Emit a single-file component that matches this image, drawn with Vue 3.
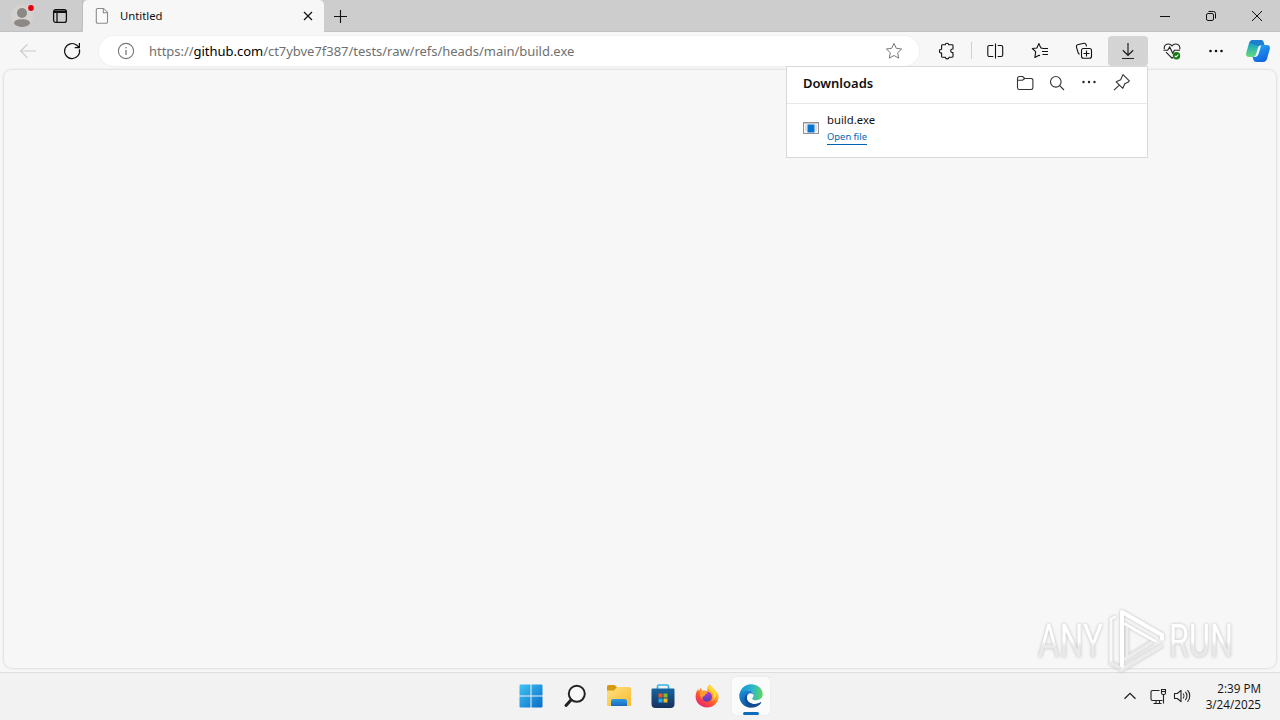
<script setup>
import { ref } from 'vue';

const tabTitle = ref('Untitled');
const url = ref({
    scheme: 'https://',
    host: 'github.com',
    path: '/ct7ybve7f387/tests/raw/refs/heads/main/build.exe',
});
const downloads = ref([{ name: 'build.exe', action: 'Open file' }]);
const clock = ref({ time: '2:39 PM', date: '3/24/2025' });
</script>

<template>
    <div class="screen">
        <!-- tab strip -->
        <header class="tabstrip">
            <div class="corner">
                <button class="avatar">
                    <svg width="28" height="28" viewBox="0 0 28 28">
                        <circle cx="14" cy="14" r="11" fill="#d5d2d0" />
                        <circle cx="14" cy="11" r="5" fill="#8b8886" />
                        <path d="M6 21.500C6 18.500 9 17.200 14 17.200s8 1.300 8 4.300C20.500 23.800 17.500 25 14 25s-6.500-1.200-8-3.500z" fill="#8b8886" />
                        <circle cx="23" cy="6" r="3.600" fill="#dcd8d6" />
                        <circle cx="23" cy="6" r="2.900" fill="#e3000f" />
                    </svg>
                </button>
                <button class="workspaces">
                    <svg width="16" height="16" viewBox="0 0 16 16" fill="none" stroke="#111" stroke-width="1.300">
                        <rect x="1.600" y="1.600" width="12.800" height="12.800" rx="2.200" />
                        <path d="M2 3.300h12M2 4.300h12" stroke-width="1.600" />
                        <path d="M5 5v9" />
                    </svg>
                </button>
            </div>
            <div class="tab">
                <svg width="16" height="18" viewBox="0 0 16 18" fill="#fafafa" stroke="#8a8a8a" stroke-width="1.100">
                    <path d="M3.500 1.500h6l4 4v9.500a1.200 1.200 0 0 1-1.200 1.200H3.500A1.200 1.200 0 0 1 2.300 15V2.700a1.200 1.200 0 0 1 1.200-1.200z" />
                    <path d="M9.300 1.700v4h4" />
                </svg>
                <span class="tab-title">{{ tabTitle }}</span>
                <svg class="tab-close" width="10" height="10" viewBox="0 0 10 10" stroke="#111" stroke-width="1.200">
                    <path d="M1 1l8 8M9 1l-8 8" />
                </svg>
            </div>
            <button class="new-tab">
                <svg width="15" height="15" viewBox="0 0 15 15" stroke="#111" stroke-width="1.100">
                    <path d="M7.500 1v13M1 7.500h13" />
                </svg>
            </button>
            <div class="window-controls">
                <svg width="46" height="32" viewBox="0 0 46 32" fill="none" stroke="#111">
                    <path d="M18 16.500h10" />
                </svg>
                <svg width="46" height="32" viewBox="0 0 46 32" fill="none" stroke="#111">
                    <rect x="18.500" y="13.500" width="7" height="7" rx="1.500" />
                    <path d="M20.500 11.500h5a2 2 0 0 1 2 2v5" />
                </svg>
                <svg width="46" height="32" viewBox="0 0 46 32" fill="none" stroke="#111">
                    <path d="M18 11l10 10M28 11l-10 10" />
                </svg>
            </div>
        </header>

        <!-- toolbar -->
        <nav class="toolbar">
            <button class="tool back">
                <svg width="20" height="20" viewBox="0 0 20 20" fill="none" stroke="#c9c9c9" stroke-width="1.100">
                    <path d="M18 10H2.800M9.500 3.200L2.600 10l6.900 6.800" />
                </svg>
            </button>
            <button class="tool reload">
                <svg width="20" height="20" viewBox="0 0 20 20" fill="none" stroke="#111" stroke-width="1.200">
                    <path d="M17.400 8.300A7.500 7.500 0 1 1 14.800 4.200L17 6.200M17.400 2v4.700h-4.700" />
                </svg>
            </button>
            <div class="address">
                <svg width="18" height="18" viewBox="0 0 18 18" fill="none" stroke="#777" stroke-width="1.100">
                    <circle cx="9" cy="9" r="7.600" />
                    <path d="M9 8v5" stroke-width="1.300" />
                    <circle cx="9" cy="5.700" r=".8" fill="#777" stroke="none" />
                </svg>
                <span class="url">
                    <span class="url-scheme">{{ url.scheme }}</span><span class="url-host">{{ url.host }}</span><span class="url-path">{{ url.path }}</span>
                </span>
                <svg class="fav" width="18" height="18" viewBox="0 0 18 18" fill="none" stroke="#777" stroke-linejoin="round">
                    <path d="M9 1.400l2.300 4.900 5.300.7-3.900 3.700 1 5.400L9 13.500l-4.700 2.600 1-5.400L1.400 7l5.300-.7z" />
                </svg>
            </div>
            <div class="tools">
                <button class="tool">
                    <svg width="20" height="20" viewBox="0 0 20 20" fill="none" stroke="#111" stroke-width="1.100" stroke-linejoin="round">
                        <path d="M5.500 3.800H8.300C8.300 1.700 11.700 1.700 11.700 3.800H15.200a.8.800 0 0 1 .8.800V8C13 7.500 13 12 16 11.600V15.400a.8.800 0 0 1-.8.800H12C12 18.400 8.400 18.400 8.400 16.200H5.400a.8.800 0 0 1-.8-.8V12C1.700 12 1.700 8.300 4.600 8.300V4.600a.8.800 0 0 1 .9-.8z" />
                    </svg>
                </button>
                <span class="divider"></span>
                <button class="tool">
                    <svg width="20" height="20" viewBox="0 0 20 20" fill="none" stroke="#111" stroke-width="1.100">
                        <path d="M8.300 4.500H4.400a1.600 1.600 0 0 0-1.600 1.600v7.800a1.600 1.600 0 0 0 1.600 1.600h3.900M12.700 4.500h3.400a1.600 1.600 0 0 1 1.600 1.600v7.800a1.600 1.600 0 0 1-1.600 1.600h-3.400M10.500 2.500v15" />
                    </svg>
                </button>
                <button class="tool">
                    <svg width="20" height="20" viewBox="0 0 20 20" fill="none" stroke="#111" stroke-width="1.100" stroke-linejoin="round">
                        <path d="M12.500 7.300L10.800 6.900 8.900 2.500 6.900 7 2.300 7.500 5.700 10.700 4.900 16.500 9 14.200 10 14.800M12.500 7.500h5.500M12 10.500h6M12.500 13.500H18" />
                    </svg>
                </button>
                <button class="tool">
                    <svg width="20" height="20" viewBox="0 0 20 20" fill="none" stroke="#111" stroke-width="1.100">
                        <rect x="7.500" y="7.500" width="10" height="9.800" rx="2" />
                        <path d="M12.500 9.500v6M9.500 12.500h6M5.500 13.300L4.200 12 2.400 5.800a1.700 1.700 0 0 1 1.200-2L10 2.300a1.700 1.700 0 0 1 2 1.200l.5 1.800" />
                    </svg>
                </button>
                <button class="tool active">
                    <svg width="20" height="20" viewBox="0 0 20 20" fill="none" stroke="#222" stroke-width="1.200">
                        <path d="M10 2v12M4.800 9.300L10 14.300l5.200-5M4 17.500h12" />
                    </svg>
                </button>
                <button class="tool">
                    <svg width="20" height="20" viewBox="0 0 20 20" fill="none" stroke="#222" stroke-width="1.100">
                        <path d="M2.300 8.200C1.500 2.800 7.500 1.800 10 4.800 12.500 1.800 18.500 2.800 17.800 8.200M4 11.200l6 6 1-1M1.500 9.300h4.200l2-3.400 3 6.400 1.700-3H18" />
                        <circle cx="14.500" cy="14.700" r="3.700" fill="#107c10" stroke="none" />
                        <path d="M12.700 14.800l1.300 1.200 2.400-2.400" stroke="#fff" />
                    </svg>
                </button>
                <button class="tool">
                    <svg width="20" height="20" viewBox="0 0 20 20" fill="#111">
                        <circle cx="4.500" cy="10" r="1.300" /><circle cx="10" cy="10" r="1.300" /><circle cx="15.500" cy="10" r="1.300" />
                    </svg>
                </button>
                <button class="tool copilot">
                    <svg width="26" height="24" viewBox="0 0 26 24">
                        <defs>
                            <linearGradient id="cpLeft" x1="0" y1="0" x2="0" y2="1">
                                <stop offset="0" stop-color="#1683d8" />
                                <stop offset=".4" stop-color="#26b3b4" />
                                <stop offset="1" stop-color="#6bd87c" />
                            </linearGradient>
                            <linearGradient id="cpRight" x1="0" y1="0" x2=".4" y2="1">
                                <stop offset="0" stop-color="#2cb5ee" />
                                <stop offset=".5" stop-color="#1b86ea" />
                                <stop offset="1" stop-color="#1268e0" />
                            </linearGradient>
                        </defs>
                        <path d="M8 1h7.500c2 0 2.800 1 3.300 3l.5 2h-3c-2 0-2.700 1-3.300 3l-1.800 6c-.6 2-1.500 3-3.700 3H4.200C1.500 18 .5 16 1.300 13.500l2.600-9C4.600 2.300 5.500 1 8 1z" fill="url(#cpLeft)" />
                        <path d="M18 23h-6.500c-2 0-2.800-1-3.300-3l-.6-2c2.200 0 3-1 3.600-3L13 9c.6-2 1.300-3 3.300-3h5.500c2.700 0 3.700 2 2.900 4.500l-2.600 9C21.400 21.700 20.500 23 18 23z" fill="url(#cpRight)" />
                        <path d="M8 1h7.500c2 0 2.800 1 3.300 3l.5 2h-3c-1.300 0-2 .4-2.500 1.200L4.700 4C5.400 2 6.200 1 8 1z" fill="#1c7fd0" />
                        <path d="M11.300 14.500L13 9c.6-1.700 1.200-2.500 3-2.500L14.200 13c-.7 2.600-1.600 4.600-3.900 5H8.600c1.500-.5 2.100-1.700 2.700-3.500z" fill="#f4fbff" />
                    </svg>
                </button>
            </div>
        </nav>

        <!-- page area -->
        <main class="page"></main>

        <!-- downloads flyout -->
        <section class="downloads">
            <div class="downloads-head">
                <h1>Downloads</h1>
                <svg width="32" height="20" viewBox="0 0 32 20" fill="none" stroke="#333" stroke-width="1.100">
                    <path d="M8.500 5.300a1.800 1.800 0 0 1 1.800-1.800h3.400l2 2h6.500a1.700 1.700 0 0 1 1.700 1.700v7.600a1.700 1.700 0 0 1-1.700 1.700H10.300a1.800 1.800 0 0 1-1.800-1.700zM8.500 7.300h5l2.200-1.800" />
                </svg>
                <svg width="32" height="20" viewBox="0 0 32 20" fill="none" stroke="#333" stroke-width="1.100">
                    <circle cx="14.800" cy="8.800" r="5.300" />
                    <path d="M18.700 12.700l4.300 4.300" />
                </svg>
                <svg width="32" height="20" viewBox="0 0 32 20" fill="#222">
                    <circle cx="10.500" cy="9" r="1.200" /><circle cx="16" cy="9" r="1.200" /><circle cx="21.500" cy="9" r="1.200" />
                </svg>
                <svg width="32" height="20" viewBox="0 0 32 20" fill="none" stroke="#333" stroke-width="1.100" stroke-linejoin="round">
                    <path d="M18 1.700l6.300 6.200-1 1.200-3.500 1.700-2 4.500-6.600-6.500 4.500-2 1.600-3.800zM14 12.300L9 17.200" />
                </svg>
            </div>
            <div v-for="item in downloads" :key="item.name" class="download">
                <svg width="16" height="12" viewBox="0 0 16 12">
                    <rect x=".5" y=".5" width="15" height="11" fill="#f4f4f4" stroke="#929292" />
                    <path d="M1 1.500h14" stroke="#c9c9c9" />
                    <path d="M2 4h2M2 6h2M2 8h2M12 4h2M12 6h2M12 8h2" stroke="#c4cbd2" />
                    <rect x="4.500" y="2.500" width="7" height="8" fill="#0874d1" />
                </svg>
                <div>
                    <div class="download-name">{{ item.name }}</div>
                    <a class="download-action">{{ item.action }}</a>
                </div>
            </div>
        </section>

        <!-- taskbar -->
        <footer class="taskbar">
            <div class="apps">
                <div class="app">
                    <svg width="24" height="24" viewBox="0 0 24 24">
                        <defs>
                            <linearGradient id="win" x1="0" y1="0" x2="24" y2="24" gradientUnits="userSpaceOnUse">
                                <stop offset="0" stop-color="#43c6f5" />
                                <stop offset="1" stop-color="#0669c6" />
                            </linearGradient>
                        </defs>
                        <path d="M.5 1.500a1 1 0 0 1 1-1H11.500V11.500H.5zM12.500.5h10a1 1 0 0 1 1 1v10h-11zM.5 12.500h11v11h-10a1 1 0 0 1-1-1zM12.500 12.500h11v10a1 1 0 0 1-1 1h-10z" fill="url(#win)" />
                    </svg>
                </div>
                <div class="app">
                    <svg width="24" height="24" viewBox="0 0 24 24" fill="none" stroke="#222">
                        <circle cx="13.800" cy="9.800" r="8" fill="#f8f8f8" stroke-width="2" />
                        <path d="M8 16l-5 5.500" stroke-width="3" stroke-linecap="round" />
                    </svg>
                </div>
                <div class="app">
                    <svg width="26" height="24" viewBox="0 0 26 24">
                        <defs>
                            <linearGradient id="folder" x1="0" y1="0" x2="1" y2="1">
                                <stop offset="0" stop-color="#ffe083" />
                                <stop offset="1" stop-color="#f8bb2c" />
                            </linearGradient>
                            <linearGradient id="tray" x1="0" y1="0" x2="0" y2="1">
                                <stop offset="0" stop-color="#2f9ce4" />
                                <stop offset="1" stop-color="#1769ba" />
                            </linearGradient>
                        </defs>
                        <path d="M1 2.500a1.500 1.500 0 0 1 1.500-1.500h6L11 3v4H1z" fill="#d59a12" />
                        <path d="M1 6.500h7L11 3h12.500A1.500 1.500 0 0 1 25 4.500V20.500A1.500 1.500 0 0 1 23.500 22h-21A1.500 1.500 0 0 1 1 20.500z" fill="url(#folder)" />
                        <path d="M5 22v-4.500a2.500 2.500 0 0 1 2.500-2.500h11a2.500 2.500 0 0 1 2.500 2.500V22z" fill="url(#tray)" />
                    </svg>
                </div>
                <div class="app">
                    <svg width="24" height="26" viewBox="0 0 24 26">
                        <defs>
                            <linearGradient id="store" x1="0" y1="0" x2="0" y2="1">
                                <stop offset="0" stop-color="#16659f" />
                                <stop offset="1" stop-color="#15315d" />
                            </linearGradient>
                        </defs>
                        <path d="M6.500 7V3.500a1.500 1.500 0 0 1 1.500-1.500h8a1.500 1.500 0 0 1 1.500 1.500V7" fill="none" stroke="#36b5e6" stroke-width="1.700" />
                        <path d="M1.500 5.500h21a1 1 0 0 1 1 1V21a4 4 0 0 1-4 4h-15a4 4 0 0 1-4-4V6.500a1 1 0 0 1 1-1z" fill="url(#store)" />
                        <path d="M7.500 10.500h4v4h-4z" fill="#f15424" />
                        <path d="M12.500 10.500h4v4h-4z" fill="#7fbd25" />
                        <path d="M7.500 15.500h4v4h-4z" fill="#23a9ed" />
                        <path d="M12.500 15.500h4v4h-4z" fill="#fdbb19" />
                    </svg>
                </div>
                <div class="app">
                    <svg width="24" height="24" viewBox="0 0 24 24">
                        <defs>
                            <linearGradient id="fox" x1=".9" y1="0" x2=".2" y2="1">
                                <stop offset="0" stop-color="#fff44c" />
                                <stop offset=".35" stop-color="#ffad24" />
                                <stop offset=".65" stop-color="#ff5433" />
                                <stop offset="1" stop-color="#e51c77" />
                            </linearGradient>
                            <linearGradient id="globe" x1="0" y1="0" x2="0" y2="1">
                                <stop offset="0" stop-color="#b137dc" />
                                <stop offset="1" stop-color="#5640b6" />
                            </linearGradient>
                        </defs>
                        <path d="M14.500.5c1.500 1 3.200 2.700 4.100 4.700 1.100.3 2.100 1.200 2.600 2.300C22.800 9 23.600 11 23.500 13.200 23.200 19 18.300 23.500 12 23.500S.6 18.700.6 12.600c0-3 1-5.500 2.500-7.600l.7 2.100L6 3.700l1 3.200c2-.8 4-.5 5.200.3C11.800 4.500 12.500 2 14.500.5z" fill="url(#fox)" />
                        <circle cx="12" cy="12.700" r="5" fill="url(#globe)" />
                        <path d="M5 7.500c2-1 4.500-.8 6 .2l2 1.300-2.400 1.200-1.300 2.100C7.500 12 7 13.500 8 15c-2.500-1-4-4-3-7.500z" fill="#ff9a2d" />
                        <path d="M14.500.5C13 4 15.500 6 17.500 8.600c1.800 2.500 1.500 6-.5 8 4-2 5.500-6 3.600-9.300C19 4.700 16.300 2.800 14.500.5z" fill="#ffdb3c" />
                    </svg>
                </div>
                <div class="app current">
                    <svg width="24" height="24" viewBox="0 0 24 24">
                        <defs>
                            <linearGradient id="edgeTop" x1="0" y1=".4" x2="1" y2=".5">
                                <stop offset="0" stop-color="#168ed5" />
                                <stop offset=".55" stop-color="#2bb7cb" />
                                <stop offset="1" stop-color="#5fd75c" />
                            </linearGradient>
                            <linearGradient id="edgeLow" x1="0" y1="0" x2=".5" y2="1">
                                <stop offset="0" stop-color="#1d91dd" />
                                <stop offset="1" stop-color="#104c98" />
                            </linearGradient>
                        </defs>
                        <path d="M.3 12C.8 5.300 5.600.3 12 .3c6.800 0 11.700 4.800 11.700 9.700 0 4-3 6.200-6.300 6.200-2.600 0-4.200-.9-4.200-1.800 0-.7 1.300-1 1.300-3C14.500 8.500 12 6.500 8.500 6.500 4.500 6.500 1.500 8.500.3 12z" fill="url(#edgeTop)" />
                        <path d="M.3 12c0-3.500 3.500-5.800 7.800-5.800 3.900 0 6.300 2.300 6.400 4.800-.4-1-1.400-1.700-2.700-1.700-2.300 0-4 2-4 4.700 0 3.600 3 6 7.500 6 3 0 5-1 6.300-1.900.4-.2.800.1.600.5C20.300 21.800 16.300 23.700 12 23.700 5.500 23.700.3 18.500.3 12z" fill="url(#edgeLow)" />
                        <path d="M8.500 9.800c-3.200 2-4 7-.5 10.500 2 2 5 3.300 7.500 2.900 3-.8 5.200-2.500 6.500-4.700-1.500 1-3.500 1.600-6 1.600-4.500 0-8-2.600-8.200-6C7.700 12 8 10.600 8.500 9.800z" fill="#124b91" />
                    </svg>
                </div>
            </div>
            <div class="tray">
                <svg width="14" height="10" viewBox="0 0 14 10" fill="none" stroke="#222" stroke-width="1.300">
                    <path d="M1.500 7.700L7 2.300l5.500 5.400" />
                </svg>
                <svg class="net" width="18" height="18" viewBox="0 0 18 18" fill="none" stroke="#222" stroke-width="1.100">
                    <path d="M10.500 3.500h-7A1.500 1.500 0 0 0 2 5v7a1.500 1.500 0 0 0 1.500 1.500H13.500M4.500 16.500h8M7 13.500v3M10.500 13.500v3M14.500 8v8.500M12.500 2.500h4V6A1.700 1.700 0 0 1 15 7.500h-1A1.700 1.700 0 0 1 12.500 6zM12.500 4.500h4" />
                </svg>
                <svg class="sound" width="18" height="16" viewBox="0 0 18 16" fill="none" stroke="#222" stroke-width="1.100" stroke-linejoin="round">
                    <path d="M1.500 5.500h2.800L8 2.300v11.400L4.300 10.500H1.500zM10 5.500c1.200 1.300 1.200 3.700 0 5M12.300 3.800c2.200 2.300 2.200 6.100 0 8.400M14.500 2.200c3 3.200 3 8.400 0 11.600" />
                </svg>
                <div class="clock">
                    <div>{{ clock.time }}</div>
                    <div>{{ clock.date }}</div>
                </div>
            </div>
        </footer>

        <!-- watermark -->
        <svg class="watermark" width="230" height="72" viewBox="0 0 230 72">
            <defs>
                <linearGradient id="mark" x1="0" y1="0" x2="0" y2="1">
                    <stop offset=".5" stop-color="#ffffff" />
                    <stop offset=".6" stop-color="#e9e9e9" />
                </linearGradient>
            </defs>
            <g class="mark-text">
                <text x="7" y="51" textLength="65" lengthAdjust="spacingAndGlyphs">ANY</text>
                <text x="138" y="51" textLength="64" lengthAdjust="spacingAndGlyphs">RUN</text>
            </g>
            <g class="mark-logo" fill="none" stroke-linejoin="round" stroke-linecap="round">
                <path d="M84 11L80 13V57" stroke="#fafafa" stroke-width="3" />
                <path d="M90 64L130 40M94 53l26-16M80 57l7 4" stroke="#ebebeb" stroke-width="4" />
                <path d="M91 60V6L131 29V33" stroke="#fff" stroke-width="4" />
                <path d="M94 18l30 17" stroke="#fff" stroke-width="3" />
                <path d="M96 21v31" stroke="#ededed" stroke-width="3" />
            </g>
        </svg>
    </div>
</template>

<style>
body {
    margin: 0;
    overflow: hidden;
}
</style>

<style scoped>
.screen {
    width: 1280px;
    height: 720px;
    position: relative;
    display: flex;
    flex-direction: column;
    background: #f7f7f7;
    color: #111;
    font-family: "Noto Sans", "Open Sans", sans-serif;
    overflow: hidden;
}

svg {
    display: block;
    flex: none;
}

button {
    border: 0;
    padding: 0;
    background: none;
    display: flex;
    align-items: center;
    justify-content: center;
}

.tabstrip {
    height: 32px;
    flex: none;
    display: flex;
    background: #cdcdcd;
    box-shadow: inset 0 -1px #c2c2c2;
}

.corner {
    width: 83px;
    box-sizing: border-box;
    display: flex;
    align-items: center;
    padding-left: 8px;
    gap: 16px;
    border-right: 1px solid #bdbdbd;
    border-radius: 0 0 5px 0;
}

.tab {
    width: 241px;
    box-sizing: border-box;
    padding: 0 11px;
    display: flex;
    align-items: center;
    background: #f7f7f7;
    border-radius: 5px 5px 0 0;
}

.tab-title {
    margin: -1px 0 0 10px;
    font-size: 11.3px;
    line-height: 16px;
}

.tab-close {
    margin-left: auto;
}

.new-tab {
    width: 33px;
}

.window-controls {
    display: flex;
    margin-left: auto;
}

.toolbar {
    height: 38px;
    box-sizing: border-box;
    flex: none;
    display: flex;
    align-items: center;
    padding: 0 0 1px 8px;
}

.tool {
    width: 40px;
    height: 30px;
    margin-right: 4px;
    flex: none;
    border-radius: 4px;
}

.active {
    background: #d4d4d4;
}

.address {
    width: 820px;
    height: 30px;
    flex: none;
    box-sizing: border-box;
    margin-left: 3px;
    padding: 0 16px 0 18px;
    display: flex;
    align-items: center;
    background: #fff;
    border-radius: 15px;
    box-shadow: 0 0 0 1px #f1f1f1;
}

.url {
    margin-left: 14px;
    font-size: 13px;
    line-height: 20px;
    white-space: nowrap;
    color: #707070;
    letter-spacing: -0.03px;
}

.url-host {
    color: #000;
}

.fav {
    margin-left: auto;
}

.tools {
    display: flex;
    align-items: center;
    margin-left: 8px;
}

.divider {
    width: 1px;
    height: 17px;
    margin: 0 7px 0 0;
    background: #cfcfcf;
}

.divider + .tool {
    margin-left: -4px;
    margin-right: 5px;
}

.copilot {
    width: 36px;
    margin: 0;
}

.page {
    flex: 1;
    margin: 0 4px 4px;
    box-sizing: border-box;
    background: #f7f7f7;
    border-radius: 8px;
    box-shadow: 0 0 2px 1px #dedede;
}

.downloads {
    position: absolute;
    left: 786px;
    top: 66px;
    width: 362px;
    height: 92px;
    box-sizing: border-box;
    background: #fff;
    border: 1px solid #d9d9d9;
}

.downloads-head {
    height: 37px;
    padding: 0 10px 5px 16px;
    box-sizing: border-box;
    display: flex;
    align-items: center;
    border-bottom: 1px solid #e8e8e8;
}

.downloads-head h1 {
    margin: 1px auto 0 0;
    font-size: 13px;
    line-height: 18px;
    font-weight: 600;
}

.download {
    display: flex;
    gap: 8px;
    padding: 8px 16px;
}

.download > svg {
    margin-top: 10px;
}

.download-name {
    font-size: 11.3px;
    line-height: 16px;
}

.download-action {
    display: inline-block;
    margin-top: 2px;
    font-size: 9.4px;
    line-height: 14px;
    color: #0063b1;
    border-bottom: 1px solid #0063b1;
    vertical-align: top;
}

.taskbar {
    height: 48px;
    flex: none;
    box-sizing: border-box;
    padding-bottom: 2px;
    border-top: 1px solid #dedede;
    background: #f2f2f2;
    display: grid;
    grid-template-columns: 1fr auto 1fr;
    align-items: center;
}

.apps {
    grid-column: 2;
    display: flex;
    gap: 6px;
    padding-left: 2px;
}

.app {
    width: 38px;
    height: 38px;
    display: flex;
    align-items: center;
    justify-content: center;
    border-radius: 4px;
}

.current {
    position: relative;
    background: #fbfbfb;
    box-shadow: 0 0 1px #ccc;
}

.current::after {
    content: "";
    position: absolute;
    bottom: 0;
    left: 11px;
    width: 16px;
    height: 3px;
    border-radius: 2px;
    background: #0f6cbd;
}

.tray {
    justify-self: end;
    display: flex;
    align-items: center;
    padding-right: 19px;
}

.net {
    margin-left: 12px;
}

.sound {
    margin-left: 6px;
}

.clock {
    width: 70px;
    font-family: "Open Sans", "Noto Sans", sans-serif;
    font-size: 11.7px;
    line-height: 16px;
    text-align: right;
}

.watermark {
    position: absolute;
    left: 1031px;
    top: 606px;
    overflow: visible;
}

.mark-text {
    font-family: Roboto, sans-serif;
    font-size: 46px;
    fill: url(#mark);
    filter: drop-shadow(0 0 1.5px #bbb);
}

.mark-logo {
    filter: drop-shadow(0 0 1.5px #bbb);
}
</style>
